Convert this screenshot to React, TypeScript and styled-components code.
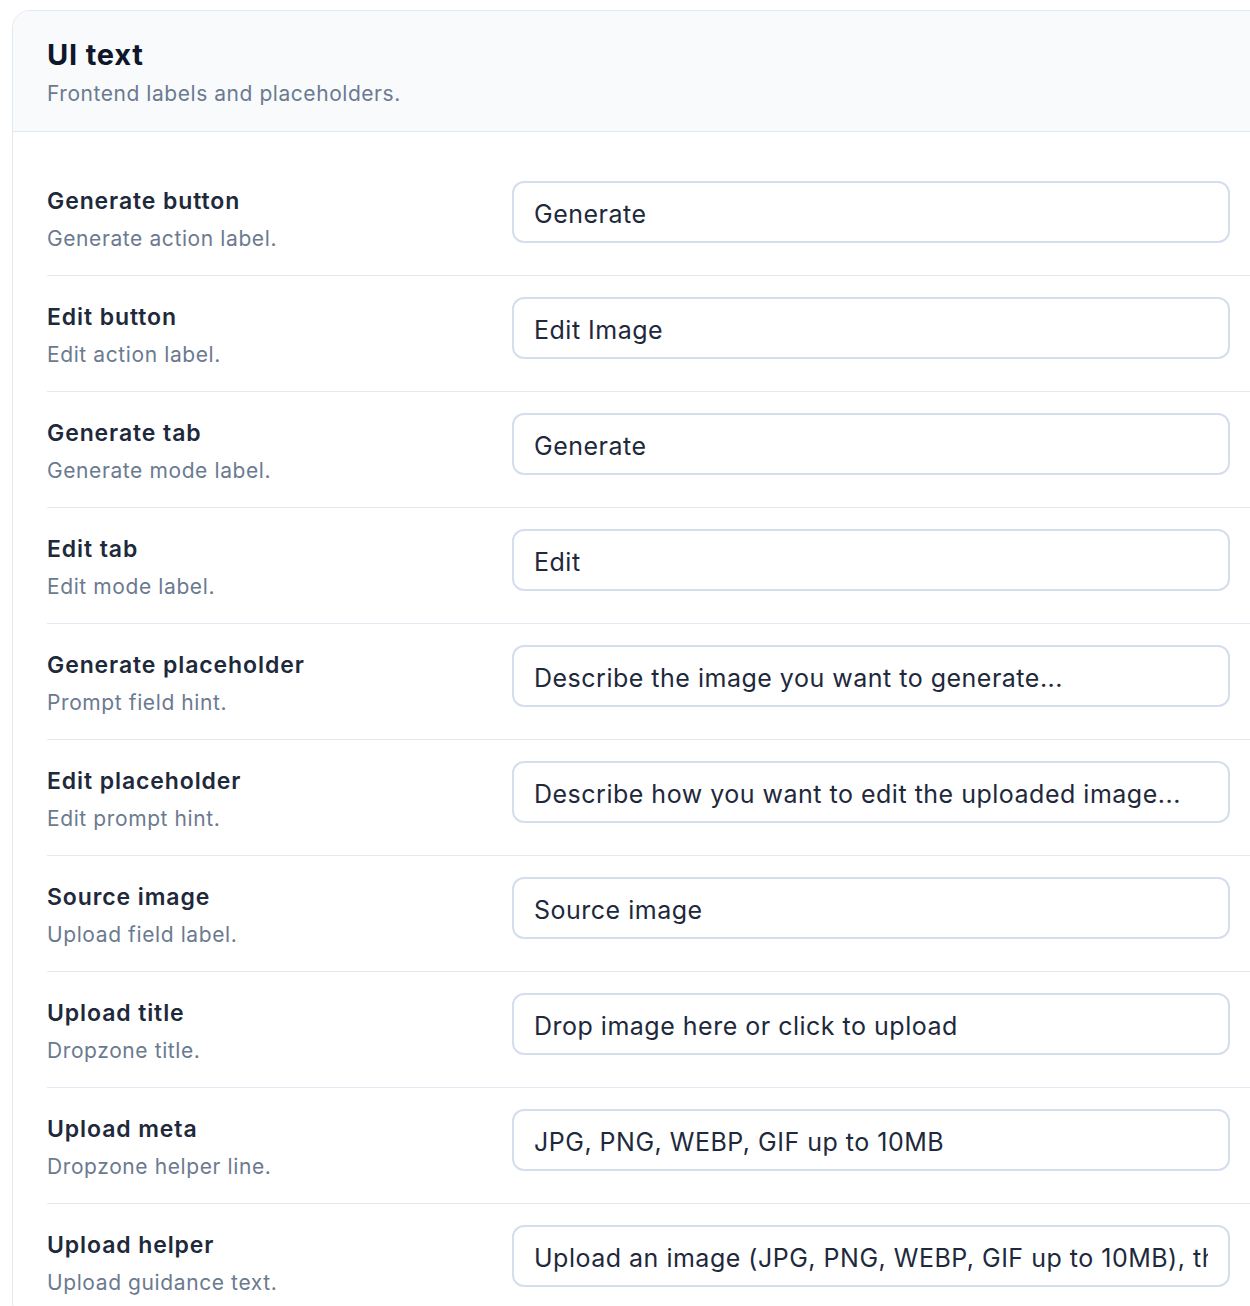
import React from 'react';
import styled, { createGlobalStyle } from 'styled-components';

const GlobalStyle = createGlobalStyle`
  html, body {
    margin: 0;
    padding: 0;
    background: #ffffff;
    overflow: hidden;
  }
  body {
    font-family: Inter, "Noto Sans", "Liberation Sans", sans-serif;
    -webkit-font-smoothing: antialiased;
  }
`;

const Page = styled.div`
  width: 1250px;
  height: 1306px;
  overflow: hidden;
  padding: 10px 0 0 12px;
  box-sizing: border-box;
`;

const Card = styled.section`
  width: 1300px;
  border: 1px solid #e2e8f0;
  border-radius: 18px;
  background: #ffffff;
  overflow: hidden;
`;

const Header = styled.header`
  background: #f8fafc;
  border-bottom: 1px solid #e2e8f0;
  padding: 26px 34px 23px;
  display: flex;
  flex-direction: column;
  gap: 7px;
`;

const Title = styled.h2`
  margin: 0;
  font-size: 29px;
  line-height: 36px;
  font-weight: 700;
  color: #0f172a;
  letter-spacing: 0.8px;
`;

const Subtitle = styled.p`
  margin: 0;
  font-size: 21px;
  line-height: 28px;
  color: #6b7a90;
  letter-spacing: 0.55px;
`;

const Body = styled.div`
  padding: 28px 34px 0;
`;

const Row = styled.div`
  display: grid;
  grid-template-columns: 445px 718px;
  column-gap: 20px;
  align-items: start;
  padding: 21px 0 23px;
  border-bottom: 1px solid #e4eaf4;

  &:last-child {
    border-bottom: none;
  }
`;

const LabelBlock = styled.div`
  padding-top: 5px;
  display: flex;
  flex-direction: column;
  gap: 10px;
`;

const LabelTitle = styled.div`
  font-size: 23px;
  line-height: 30px;
  font-weight: 600;
  color: #1e293b;
  letter-spacing: 0.9px;
`;

const LabelHint = styled.div`
  font-size: 21px;
  line-height: 26px;
  color: #6b7a90;
  letter-spacing: 0.6px;
`;

const TextInput = styled.input`
  box-sizing: border-box;
  width: 100%;
  height: 62px;
  padding: 3px 20px 0;
  border: 2px solid #d4deec;
  border-radius: 12px;
  background: #ffffff;
  font-family: Inter, "Noto Sans", "Liberation Sans", sans-serif;
  font-size: 25px;
  letter-spacing: 0.5px;
  color: #1e293b;
  outline: none;
`;

const fields = [
  { label: 'Generate button', hint: 'Generate action label.', value: 'Generate' },
  { label: 'Edit button', hint: 'Edit action label.', value: 'Edit Image' },
  { label: 'Generate tab', hint: 'Generate mode label.', value: 'Generate' },
  { label: 'Edit tab', hint: 'Edit mode label.', value: 'Edit' },
  {
    label: 'Generate placeholder',
    hint: 'Prompt field hint.',
    value: 'Describe the image you want to generate...',
  },
  {
    label: 'Edit placeholder',
    hint: 'Edit prompt hint.',
    value: 'Describe how you want to edit the uploaded image...',
  },
  { label: 'Source image', hint: 'Upload field label.', value: 'Source image' },
  { label: 'Upload title', hint: 'Dropzone title.', value: 'Drop image here or click to upload' },
  { label: 'Upload meta', hint: 'Dropzone helper line.', value: 'JPG, PNG, WEBP, GIF up to 10MB' },
  {
    label: 'Upload helper',
    hint: 'Upload guidance text.',
    value: 'Upload an image (JPG, PNG, WEBP, GIF up to 10MB), then describe your edit.',
  },
];

function App() {
  return (
    <>
      <GlobalStyle />
      <Page>
        <Card>
          <Header>
            <Title>UI text</Title>
            <Subtitle>Frontend labels and placeholders.</Subtitle>
          </Header>
          <Body>
            {fields.map((field) => (
              <Row key={field.label}>
                <LabelBlock>
                  <LabelTitle>{field.label}</LabelTitle>
                  <LabelHint>{field.hint}</LabelHint>
                </LabelBlock>
                <TextInput type="text" defaultValue={field.value} />
              </Row>
            ))}
          </Body>
        </Card>
      </Page>
    </>
  );
}

export default App;
